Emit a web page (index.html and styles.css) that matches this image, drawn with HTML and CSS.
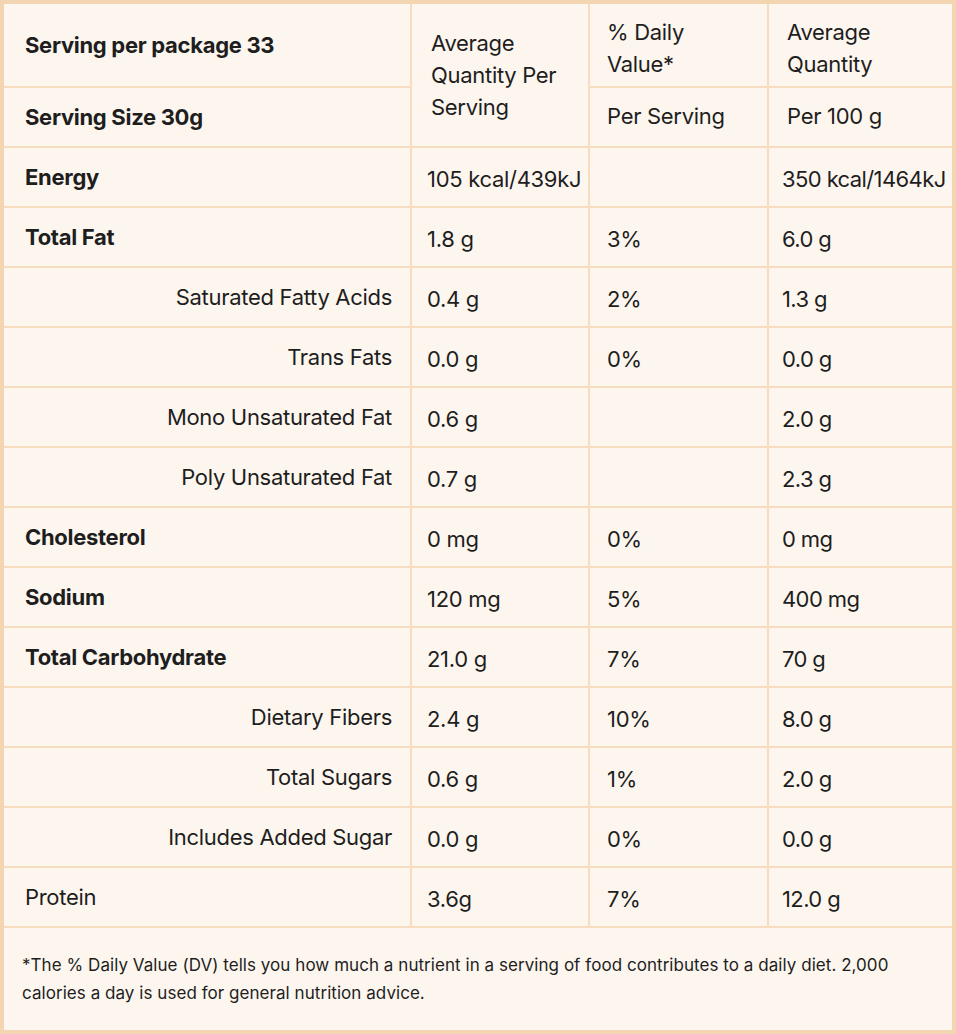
FILE: index.html
```
<!DOCTYPE html>
<html lang="en">
<head>
<meta charset="utf-8">
<title>Nutrition Facts</title>
<link rel="stylesheet" href="styles.css">
</head>
<body>
<div class="panel">
  <div class="grid">
    <div class="cell lead bold">Serving per package 33</div>
    <div class="cell head qty span2">Average Quantity Per Serving</div>
    <div class="cell head top dv">% Daily Value*</div>
    <div class="cell head top avg">Average Quantity</div>

    <div class="cell lead bold">Serving Size 30g</div>
    <div class="cell head low dv">Per Serving</div>
    <div class="cell head low avg">Per 100 g</div>

    <div class="cell lead bold">Energy</div>
    <div class="cell val c2">105 kcal/439kJ</div>
    <div class="cell val c3"></div>
    <div class="cell val c4">350 kcal/1464kJ</div>

    <div class="cell lead bold">Total Fat</div>
    <div class="cell val c2">1.8 g</div>
    <div class="cell val c3">3%</div>
    <div class="cell val c4">6.0 g</div>

    <div class="cell sub">Saturated Fatty Acids</div>
    <div class="cell val c2">0.4 g</div>
    <div class="cell val c3">2%</div>
    <div class="cell val c4">1.3 g</div>

    <div class="cell sub">Trans Fats</div>
    <div class="cell val c2">0.0 g</div>
    <div class="cell val c3">0%</div>
    <div class="cell val c4">0.0 g</div>

    <div class="cell sub">Mono Unsaturated Fat</div>
    <div class="cell val c2">0.6 g</div>
    <div class="cell val c3"></div>
    <div class="cell val c4">2.0 g</div>

    <div class="cell sub">Poly Unsaturated Fat</div>
    <div class="cell val c2">0.7 g</div>
    <div class="cell val c3"></div>
    <div class="cell val c4">2.3 g</div>

    <div class="cell lead bold">Cholesterol</div>
    <div class="cell val c2">0 mg</div>
    <div class="cell val c3">0%</div>
    <div class="cell val c4">0 mg</div>

    <div class="cell lead bold">Sodium</div>
    <div class="cell val c2">120 mg</div>
    <div class="cell val c3">5%</div>
    <div class="cell val c4">400 mg</div>

    <div class="cell lead bold">Total Carbohydrate</div>
    <div class="cell val c2">21.0 g</div>
    <div class="cell val c3">7%</div>
    <div class="cell val c4">70 g</div>

    <div class="cell sub">Dietary Fibers</div>
    <div class="cell val c2">2.4 g</div>
    <div class="cell val c3">10%</div>
    <div class="cell val c4">8.0 g</div>

    <div class="cell sub">Total Sugars</div>
    <div class="cell val c2">0.6 g</div>
    <div class="cell val c3">1%</div>
    <div class="cell val c4">2.0 g</div>

    <div class="cell sub">Includes Added Sugar</div>
    <div class="cell val c2">0.0 g</div>
    <div class="cell val c3">0%</div>
    <div class="cell val c4">0.0 g</div>

    <div class="cell lead">Protein</div>
    <div class="cell val c2">3.6g</div>
    <div class="cell val c3">7%</div>
    <div class="cell val c4">12.0 g</div>

    <div class="cell note">*The % Daily Value (DV) tells you how much a nutrient in a serving of food contributes to a daily diet. 2,000 calories a day is used for general nutrition advice.</div>
  </div>
</div>
</body>
</html>
```
FILE: styles.css
```
* { box-sizing: border-box; }
html, body { margin: 0; padding: 0; background: #fdf6ef; }
body {
  font-family: Inter, "Noto Sans", "Liberation Sans", sans-serif;
  color: #1e1e1e;
}
.panel {
  width: 956px;
  height: 1034px;
  border: 4px solid #f4d5b1;
  background: #f7dcbf;
}
.grid {
  display: grid;
  grid-template-columns: 406px 176px 177px 183px;
  grid-template-rows: 82px repeat(14, 58px) 102px;
  gap: 2px;
  height: 100%;
}
.cell {
  background: #fdf6ef;
  display: flex;
  align-items: center;
  font-size: 22px;
  letter-spacing: -0.3px;
  line-height: 32px;
  font-weight: 400;
}
.bold { font-weight: 700; }
.lead { padding-left: 21px; }
.sub { justify-content: flex-end; padding-right: 18px; }
.span2 { grid-row: span 2; }
.head.qty { padding-left: 19px; padding-right: 8px; }
.head.dv { padding-left: 17px; padding-right: 40px; }
.head.avg { padding-left: 18px; padding-right: 10px; }
.head.top { padding-top: 6px; }
.head.low { padding-bottom: 3px; }
.val { padding-top: 3px; }
.c2 { padding-left: 15px; }
.c3 { padding-left: 17px; }
.c4 { padding-left: 13px; }
.c4.val { letter-spacing: -0.6px; }
.note {
  grid-column: 1 / -1;
  padding: 0 20px 0 18px;
  font-size: 17px;
  line-height: 28px;
  letter-spacing: 0.05px;
}
```
